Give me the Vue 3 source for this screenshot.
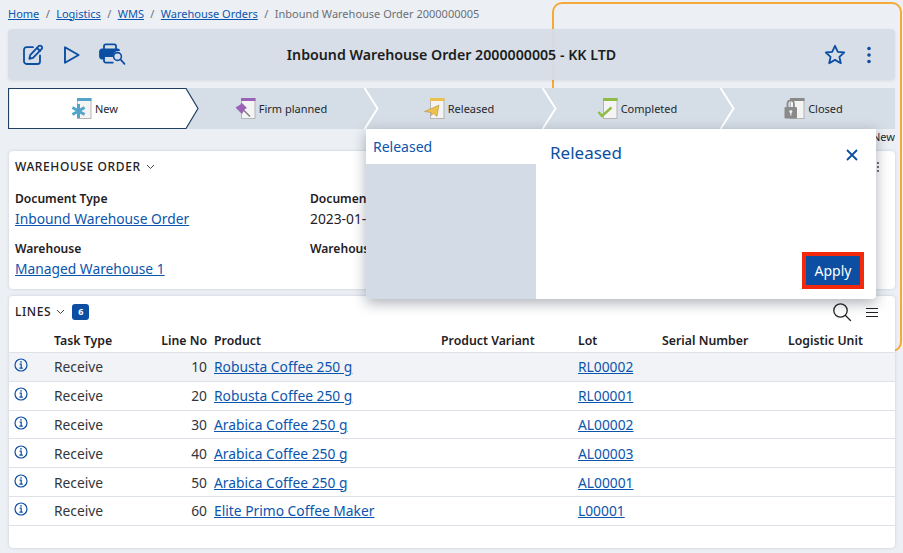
<template>
  <div class="page">
    <div class="focus-outline" />

    <nav class="breadcrumb">
      <template v-for="crumb in crumbs" :key="crumb">
        <a href="#">{{ crumb }}</a>
        <span class="sep">/</span>
      </template>
      <span class="current">Inbound Warehouse Order 2000000005</span>
    </nav>

    <header class="toolbar">
      <div class="toolbar-actions">
        <svg class="tool" width="22" height="22" viewBox="0 0 22 22" fill="none" stroke="#0b4ea2" stroke-width="1.8" stroke-linecap="round" stroke-linejoin="round">
          <path d="M11 3.2H4.6A2.6 2.6 0 0 0 2 5.8v11.6A2.6 2.6 0 0 0 4.6 20h10.8a2.6 2.6 0 0 0 2.6-2.6V11.5" />
          <path d="M8.2 11.2 16.6 2.2a2 2 0 0 1 2.9 0 2 2 0 0 1 0 2.9L11 13.9l-3.6.9z" />
          <path d="M15 4l3.2 3" />
        </svg>
        <svg class="tool" width="18" height="20" viewBox="0 0 18 20" fill="none" stroke="#0b4ea2" stroke-width="1.9" stroke-linejoin="round">
          <path d="M2 2.2v15.6L15.6 10z" />
        </svg>
        <svg class="tool" width="27" height="23" viewBox="0 0 27 23" fill="none" stroke="#0b4ea2" stroke-width="1.8" stroke-linecap="round" stroke-linejoin="round">
          <path d="M5 6.5V3.2A1.8 1.8 0 0 1 6.8 1.4h8.4A1.8 1.8 0 0 1 17 3.2v3.3" />
          <path d="M1 8.500A2 2 0 0 1 3 6.500h15.500a2 2 0 0 1 1.500.7 5.500 5.500 0 0 0-6.500 5.800H5v2.500H3a2 2 0 0 1-2-2z" fill="#0b4ea2" />
          <path d="M5 13v4.800a1.800 1.800 0 0 0 1.800 1.800h7" />
          <circle cx="18.500" cy="13.500" r="3.900" stroke-width="1.600" />
          <path d="M21.500 16.500 25.500 20.800" />
        </svg>
      </div>
      <h1 class="toolbar-title">Inbound Warehouse Order 2000000005 - KK LTD</h1>
      <div class="toolbar-right">
        <svg width="22" height="21" viewBox="0 0 22 21" fill="none" stroke="#0b4ea2" stroke-width="1.800" stroke-linejoin="round">
          <path d="M11 1.800l2.800 6 6.400.7-4.800 4.300 1.400 6.400L11 15.900l-5.800 3.300 1.400-6.400L1.800 8.500l6.400-.7z" />
        </svg>
        <svg width="6" height="18" viewBox="0 0 6 18" fill="#0b4ea2">
          <circle cx="3" cy="2.500" r="1.800" />
          <circle cx="3" cy="9" r="1.800" />
          <circle cx="3" cy="15.500" r="1.800" />
        </svg>
      </div>
    </header>

    <section class="stepper">
      <div
        v-for="(step, i) in steps"
        :key="step.label"
        class="step"
        :class="{ 'step--active': i === 0 }"
      >
        <svg v-if="i === 0" class="step-outline" width="192" height="41" viewBox="0 0 192 41">
          <path d="M.5.5H178L190 20.500 178 40.500H.5z" fill="#fff" stroke="#1f3f63" stroke-width="1.200" />
        </svg>
        <svg v-else-if="i < 4" class="step-chevron" width="16" height="41" viewBox="0 0 16 41" fill="none" stroke="#fff" stroke-width="2">
          <path d="M.5 0 13.500 20.500 .5 41" />
        </svg>

        <div class="step-content">
          <svg class="step-icon" width="21" height="21" viewBox="0 0 21 21">
            <rect x="6.500" y="0.500" width="13.500" height="20" fill="#f4f4f4" stroke="#b5b5b5" />
            <rect x="6" y="0" width="14.500" height="3" :fill="step.color" />

            <g v-if="step.kind === 'new'" :stroke="step.color" stroke-width="3">
              <path d="M7.500 6v14M1.400 9.500l12.200 7M13.600 9.500l-12.200 7" />
            </g>
            <g v-else-if="step.kind === 'firm'">
              <path d="M.500 9.500 5.500 6.500 6.500 4.500 12 10l-2 1-3 5z" :fill="step.color" />
              <path d="M9 12.500l6 6" stroke="#777" stroke-width="1.300" />
            </g>
            <g v-else-if="step.kind === 'released'">
              <path d="M.500 13.500 15 7l-2 11.500-3.500-3-2 2-.5-3z" :fill="step.color" stroke="#a88a3a" stroke-width=".5" />
            </g>
            <g v-else-if="step.kind === 'completed'">
              <path d="M1.500 14l3.500 4 9.500-8.500" fill="none" :stroke="step.color" stroke-width="2.400" />
            </g>
            <g v-else>
              <rect x="0.500" y="9" width="12.500" height="11.500" rx="1" :fill="step.color" />
              <path d="M3.500 9V5.500a3.200 3.200 0 0 1 6.400 0V9" fill="none" :stroke="step.color" stroke-width="1.800" />
              <circle cx="6.800" cy="13.500" r="1.500" fill="#eee" />
              <rect x="6.200" y="14" width="1.200" height="3.500" fill="#eee" />
            </g>
          </svg>
          <span>{{ step.label }}</span>
        </div>
      </div>
    </section>

    <div class="status-row">New</div>

    <section class="card order-card">
      <div class="section-title">
        WAREHOUSE ORDER
        <svg width="9" height="6" viewBox="0 0 9 6" fill="none" stroke="#444" stroke-width="1"><path d="M1 1l3.500 3.500L8 1" /></svg>
      </div>
      <div class="fields">
        <div v-for="field in fields" :key="field.label" class="field">
          <label>{{ field.label }}</label>
          <a v-if="field.link" href="#">{{ field.value }}</a>
          <span v-else>{{ field.value }}</span>
        </div>
      </div>
      <svg class="card-menu" width="4" height="12" viewBox="0 0 4 12" fill="#444">
        <circle cx="2" cy="2" r="1" />
        <circle cx="2" cy="6" r="1" />
        <circle cx="2" cy="10" r="1" />
      </svg>
    </section>

    <section class="card lines-card">
      <div class="lines-head">
        <div class="section-title lines-title">
          LINES
          <svg width="9" height="6" viewBox="0 0 9 6" fill="none" stroke="#444" stroke-width="1"><path d="M1 1l3.500 3.500L8 1" /></svg>
          <span class="badge">{{ lines.length }}</span>
        </div>
        <div class="lines-tools">
          <svg width="20" height="20" viewBox="0 0 20 20" fill="none" stroke="#222" stroke-width="1.300" stroke-linecap="round">
            <circle cx="8.500" cy="8.500" r="6.700" />
            <path d="M13.500 13.500 18.500 18.500" />
          </svg>
          <svg width="12" height="9" viewBox="0 0 12 9" stroke="#222" stroke-width="1">
            <path d="M0 .5h12M0 4.500h12M0 8.500h12" />
          </svg>
        </div>
      </div>

      <table class="lines-table">
        <colgroup>
          <col style="width: 45px" />
          <col style="width: 92px" />
          <col style="width: 68px" />
          <col style="width: 227px" />
          <col style="width: 137px" />
          <col style="width: 84px" />
          <col style="width: 126px" />
          <col />
        </colgroup>
        <thead>
          <tr>
            <th />
            <th>Task Type</th>
            <th class="num">Line No</th>
            <th>Product</th>
            <th>Product Variant</th>
            <th>Lot</th>
            <th>Serial Number</th>
            <th>Logistic Unit</th>
          </tr>
        </thead>
        <tbody>
          <tr v-for="(line, i) in lines" :key="line.no" :class="{ hovered: i === 0 }">
            <td class="info-cell">
              <svg width="14" height="14" viewBox="0 0 14 14" fill="none" stroke="#0b4ea2" stroke-width="1.200">
                <circle cx="7" cy="7" r="6" />
                <path d="M5.600 6.200H7.200V10M5.400 10.200h3.400" />
                <circle cx="7" cy="3.900" r=".8" fill="#0b4ea2" stroke="none" />
              </svg>
            </td>
            <td>Receive</td>
            <td class="num">{{ line.no }}</td>
            <td><a href="#">{{ line.product }}</a></td>
            <td />
            <td><a href="#">{{ line.lot }}</a></td>
            <td />
            <td />
          </tr>
        </tbody>
      </table>
    </section>

    <div class="modal">
      <aside class="modal-side">
        <div class="modal-side-head">Released</div>
        <div class="modal-side-body" />
      </aside>
      <div class="modal-main">
        <h2>Released</h2>
        <svg class="modal-close" width="12" height="12" viewBox="0 0 12 12" stroke="#0b4ea2" stroke-width="1.800">
          <path d="M1 1l10 10M11 1 1 11" />
        </svg>
        <button class="apply">Apply</button>
      </div>
    </div>
  </div>
</template>

<script setup>
const crumbs = ["Home", "Logistics", "WMS", "Warehouse Orders"];

const steps = [
  { label: "New", kind: "new", color: "#52a5c9" },
  { label: "Firm planned", kind: "firm", color: "#9a63b8" },
  { label: "Released", kind: "released", color: "#ecc04f" },
  { label: "Completed", kind: "completed", color: "#8fbc45" },
  { label: "Closed", kind: "closed", color: "#8a8a8a" },
];

const fields = [
  { label: "Document Type", value: "Inbound Warehouse Order", link: true },
  { label: "Document Date", value: "2023-01-10" },
  { label: "Warehouse", value: "Managed Warehouse 1", link: true },
  { label: "Warehouse Document", value: "" },
];

const lines = [
  { no: 10, product: "Robusta Coffee 250 g", lot: "RL00002" },
  { no: 20, product: "Robusta Coffee 250 g", lot: "RL00001" },
  { no: 30, product: "Arabica Coffee 250 g", lot: "AL00002" },
  { no: 40, product: "Arabica Coffee 250 g", lot: "AL00003" },
  { no: 50, product: "Arabica Coffee 250 g", lot: "AL00001" },
  { no: 60, product: "Elite Primo Coffee Maker", lot: "L00001" },
];
</script>

<style>
html,
body {
  margin: 0;
  background: #ecf0f5;
}
</style>

<style scoped>
.page {
  position: relative;
  width: 903px;
  height: 553px;
  overflow: hidden;
  box-sizing: border-box;
  padding: 0 8px 0 8px;
  background: #ecf0f5;
  color: #1f2124;
  font-family: "Noto Sans", "Open Sans", sans-serif;
  font-size: 13.8px;
}

a {
  color: #0b55ad;
  text-decoration: underline;
}

/* orange highlight behind the page content */
.focus-outline {
  position: absolute;
  left: 552px;
  top: 2px;
  width: 346px;
  height: 346px;
  border: 2px solid #f5a936;
  border-radius: 10px;
}

.breadcrumb {
  position: relative;
  height: 29px;
  display: flex;
  align-items: center;
  gap: 6.4px;
  padding-bottom: 3px;
  box-sizing: border-box;
  font-size: 11px;
}

.breadcrumb .sep,
.breadcrumb .current {
  color: #6b6f75;
}

.toolbar {
  position: relative;
  height: 51px;
  display: flex;
  align-items: center;
  justify-content: space-between;
  background: rgba(213, 221, 230, 0.96);
  border-radius: 4px;
  box-shadow: 0 1px 3px rgba(0, 0, 0, 0.08);
}

.toolbar-actions {
  display: flex;
  align-items: center;
  gap: 0;
  padding-left: 14px;
}

.tool:nth-child(2) {
  margin-left: 19px;
}

.tool:nth-child(3) {
  margin-left: 18px;
}

.toolbar-title {
  position: absolute;
  left: 0;
  right: 0;
  margin: 0;
  text-align: center;
  font-size: 14.2px;
  font-weight: 600;
  color: #1b1d20;
}

.toolbar-right {
  display: flex;
  align-items: center;
  gap: 20px;
  padding-right: 23px;
}

.stepper {
  position: relative;
  display: grid;
  grid-template-columns: 178px 178px 178px 178px 175px;
  width: 887px;
  height: 41px;
  margin-top: 8px;
  background: #d5dde6;
}

.step {
  position: relative;
  display: flex;
  align-items: center;
  justify-content: center;
  padding-left: 12px;
  font-size: 11px;
  color: #25282c;
}

.step--active {
  padding-left: 0;
  padding-right: 5px;
}

.step-outline {
  position: absolute;
  left: 0;
  top: 0;
}

.step-chevron {
  position: absolute;
  right: -16px;
  top: 0;
  z-index: 1;
}

.step-content {
  position: relative;
  display: flex;
  align-items: center;
  gap: 3px;
}

.step-icon {
  flex: none;
}

.status-row {
  height: 22px;
  box-sizing: border-box;
  text-align: right;
  font-size: 11px;
  color: #25282c;
}

.card {
  position: relative;
  margin-left: 1px;
  background: #fff;
  border-radius: 4px;
  box-shadow: 0 0 3px rgba(40, 60, 90, 0.2);
}

.order-card {
  height: 138px;
  padding: 8px 6px;
  box-sizing: border-box;
}

.section-title {
  display: flex;
  align-items: center;
  gap: 5px;
  font-size: 12px;
  font-weight: 500;
  letter-spacing: 0.6px;
  line-height: 16px;
}

.fields {
  display: grid;
  grid-template-columns: 295px 1fr;
  row-gap: 8px;
  margin-top: 16px;
}

.field {
  display: flex;
  flex-direction: column;
  height: 42px;
}

.field label {
  font-size: 12.1px;
  font-weight: 600;
  line-height: 16px;
}

.field a,
.field span {
  font-size: 13.8px;
  line-height: 24px;
}

.card-menu {
  position: absolute;
  right: 15px;
  top: 10px;
}

.lines-card {
  height: 252px;
  margin-top: 7px;
}

.lines-head {
  display: flex;
  align-items: center;
  justify-content: space-between;
  height: 32px;
  padding: 0 17px 0 6px;
}

.lines-title {
  gap: 5px;
}

.badge {
  display: inline-block;
  width: 17px;
  height: 16px;
  margin-left: 2px;
  border-radius: 3px;
  background: #0b4ea2;
  color: #fff;
  font-size: 9px;
  font-weight: 700;
  line-height: 16px;
  letter-spacing: 0;
  text-align: center;
}

.lines-tools {
  display: flex;
  align-items: center;
  gap: 14px;
}

.lines-table {
  width: 100%;
  table-layout: fixed;
  border-collapse: collapse;
}

.lines-table th {
  height: 24px;
  padding: 0;
  text-align: left;
  font-size: 12.3px;
  font-weight: 600;
  border-bottom: 1px solid #dde2e9;
}

.lines-table td {
  height: 27.8px;
  padding: 0;
  border-bottom: 1px solid #dde2e9;
  color: #33363a;
}

.lines-table .num {
  padding-right: 7px;
  text-align: right;
}

.lines-table tr.hovered td {
  background: #f1f3f7;
}

.info-cell svg {
  display: block;
  margin: -3px 0 0 5px;
}

.modal {
  position: absolute;
  left: 366px;
  top: 129px;
  z-index: 5;
  display: flex;
  width: 510px;
  height: 170px;
  background: #fff;
  border-radius: 0 0 4px 4px;
  box-shadow: 0 4px 14px rgba(20, 30, 50, 0.35);
  overflow: hidden;
}

.modal-side {
  display: flex;
  flex-direction: column;
  width: 170px;
}

.modal-side-head {
  height: 35px;
  padding: 8px 7px 0;
  box-sizing: border-box;
  color: #0b55ad;
  font-size: 14px;
}

.modal-side-body {
  flex: 1;
  background: #d3dce6;
}

.modal-main {
  position: relative;
  flex: 1;
}

.modal-main h2 {
  margin: 12px 0 0 14px;
  color: #0b4ea2;
  font-size: 17px;
  font-weight: 400;
  line-height: 24px;
}

.modal-close {
  position: absolute;
  top: 20px;
  right: 18px;
}

.apply {
  position: absolute;
  right: 12px;
  bottom: 10px;
  width: 62px;
  height: 37px;
  box-sizing: border-box;
  border: 4px solid #f4290c;
  background: #0b4ea2;
  color: #fff;
  font-family: inherit;
  font-size: 14px;
  font-weight: 400;
}
</style>
